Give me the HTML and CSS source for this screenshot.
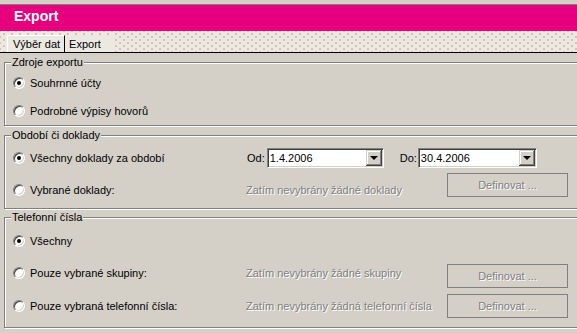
FILE: index.html
```html
<!DOCTYPE html>
<html lang="cs">

<head>
    <meta charset="UTF-8">
    <title>Export</title>
    <link rel="stylesheet" href="styles.css">
</head>

<body>
    <div class="topbar"></div>
    <header class="titlebar">Export</header>
    <nav class="tabstrip">
        <div class="tab active">Výběr dat</div>
        <div class="tab">Export</div>
    </nav>
    <main class="content">
        <!-- Zdroje exportu -->
        <section class="group g1">
            <div class="legend">Zdroje exportu</div>
            <div class="row h28">
                <label class="choice"><span class="radio checked"></span>Souhrnné účty</label>
            </div>
            <div class="row h28">
                <label class="choice"><span class="radio"></span>Podrobné výpisy hovorů</label>
            </div>
        </section>

        <!-- Obdobi -->
        <section class="group g2">
            <div class="legend">Období či doklady</div>
            <div class="row h32">
                <label class="choice"><span class="radio checked"></span>Všechny doklady za období</label>
                <span class="field-label od">Od:</span>
                <div class="combo"><span class="value">1.4.2006</span><span class="drop"></span></div>
                <span class="field-label do">Do:</span>
                <div class="combo wide"><span class="value">30.4.2006</span><span class="drop"></span></div>
            </div>
            <div class="row h32">
                <label class="choice"><span class="radio"></span>Vybrané doklady:</label>
                <span class="hint">Zatím nevybrány žádné doklady</span>
                <div class="btn up">Definovat ...</div>
            </div>
        </section>

        <!-- Telefonni cisla -->
        <section class="group g3">
            <div class="legend">Telefonní čísla</div>
            <div class="row h33">
                <label class="choice"><span class="radio checked"></span>Všechny</label>
            </div>
            <div class="row h32">
                <label class="choice"><span class="radio"></span>Pouze vybrané skupiny:</label>
                <span class="hint">Zatím nevybrány žádné skupiny</span>
                <div class="btn down">Definovat ...</div>
            </div>
            <div class="row h34">
                <label class="choice"><span class="radio"></span>Pouze vybraná telefonní čísla:</label>
                <span class="hint">Zatím nevybrány žádná telefonní čísla</span>
                <div class="btn">Definovat ...</div>
            </div>
        </section>
    </main>
</body>

</html>
```

FILE: styles.css
```css
body {
    margin: 0;
    width: 577px;
    height: 333px;
    overflow: hidden;
    background-color: #d4d0c8;
    font: 11px "Liberation Sans", Arial, sans-serif;
    color: #000;
}

/* window chrome */
.topbar {
    height: 4px;
    border-bottom: 1px solid #808080;
}

.titlebar {
    height: 26px;
    line-height: 23px;
    padding-left: 14px;
    background-color: #e6007e;
    color: #fff;
    font-size: 14px;
    font-weight: bold;
}

.tabstrip {
    display: flex;
    align-items: flex-end;
    height: 21px;
    padding-left: 7px;
    border-bottom: 1px solid #000;
    background-color: #efe8e1;
    background-image: radial-gradient(circle, #cdc6be 0.8px, transparent 1.3px),
        radial-gradient(circle, #cdc6be 0.8px, transparent 1.3px);
    background-size: 8px 6px;
    background-position: 0 0, 4px 3px;
}

.tab {
    height: 16px;
    line-height: 16px;
    padding: 0 12px 0 4px;
    background-color: #ece8e2;
}

.tab.active {
    height: 16px;
    padding: 0 4px 0 5px;
    border-top: 1px solid #fff;
    border-left: 1px solid #fff;
    border-right: 1px solid #000;
}

/* group boxes */
.content {
    padding: 9px 0 0 4px;
}

.group {
    margin-right: -20px;
    border: 1px solid #808080;
    box-shadow: inset 1px 1px 0 #fff, 1px 1px 0 #fff;
}

.g2 {
    margin-top: 9px;
    padding-bottom: 2px;
}

.g3 {
    margin-top: 8px;
    padding-bottom: 4px;
}

.legend {
    width: fit-content;
    margin: -7px 0 0 6px;
    padding: 0 1px;
    line-height: 13px;
    background-color: #d4d0c8;
}

.row {
    display: flex;
    align-items: center;
    padding-left: 8px;
}

.h28 { height: 28px; }
.h32 { height: 32px; }
.h33 { height: 33px; }
.h34 { height: 34px; }

.choice {
    display: flex;
    align-items: center;
    gap: 5px;
    width: 233px;
}

/* classic radio */
.radio {
    position: relative;
    width: 12px;
    height: 12px;
    box-sizing: border-box;
    border-radius: 50%;
    background-color: #fff;
    border: 1px solid;
    border-color: #808080 #fff #fff #808080;
    box-shadow: inset 1px 1px 0 #404040, inset -1px -1px 0 #d4d0c8;
}

.radio.checked:after {
    content: "";
    position: absolute;
    left: 3px;
    top: 3px;
    width: 4px;
    height: 4px;
    border-radius: 50%;
    background-color: #000;
}

.field-label.od {
    margin-left: 1px;
    margin-right: 2px;
}

.field-label.do {
    margin-left: 16px;
    margin-right: 1px;
}

.combo {
    display: flex;
    align-items: center;
    width: 117px;
    height: 20px;
    box-sizing: border-box;
    padding: 1px;
    background-color: #fff;
    border: 1px solid;
    border-color: #808080 #fff #fff #808080;
    box-shadow: inset 1px 1px 0 #404040, inset -1px -1px 0 #d4d0c8;
}

.combo.wide {
    width: 119px;
}

.combo .value {
    padding-left: 1px;
}

.drop {
    position: relative;
    margin-left: auto;
    width: 16px;
    height: 16px;
    box-sizing: border-box;
    background-color: #d4d0c8;
    box-shadow: inset -1px -1px 0 #404040, inset 1px 1px 0 #d4d0c8,
        inset -2px -2px 0 #808080, inset 2px 2px 0 #fff;
}

.drop:after {
    content: "";
    position: absolute;
    left: 4px;
    top: 6px;
    border-left: 4px solid transparent;
    border-right: 4px solid transparent;
    border-top: 4px solid #000;
}

.hint {
    width: 201px;
    color: #808080;
    text-shadow: 1px 1px 0 #fff;
}

.btn {
    width: 121px;
    height: 24px;
    box-sizing: border-box;
    border: 1px solid #808080;
    line-height: 22px;
    text-align: center;
    color: #808080;
    text-shadow: 1px 1px 0 #fff;
}

.btn.up {
    margin-top: -10px;
}

.btn.down {
    margin-top: 5px;
}
```
